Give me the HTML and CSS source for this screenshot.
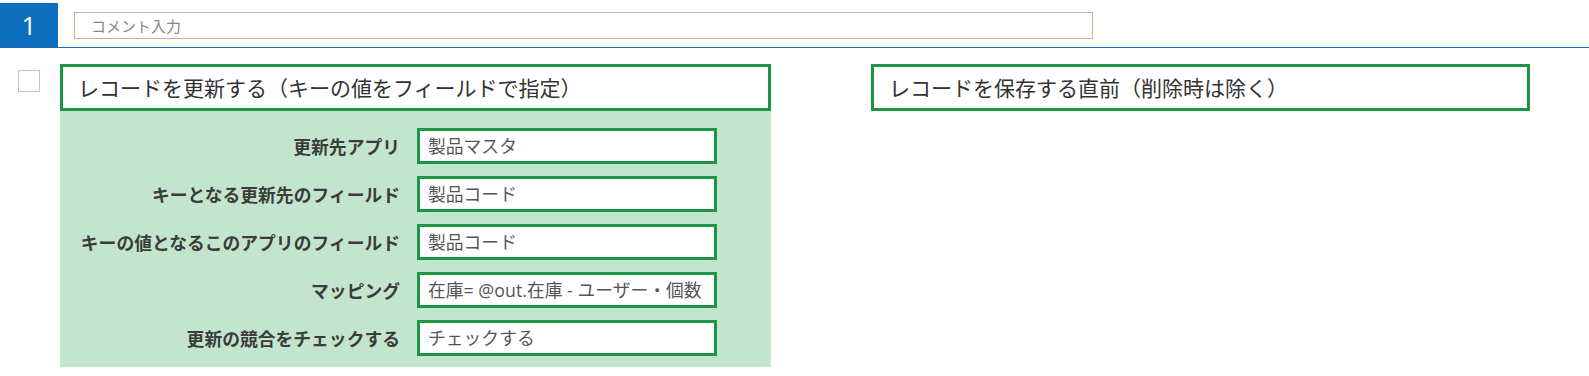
FILE: index.html
```html
<!DOCTYPE html>
<html lang="ja">
<head>
    <meta charset="UTF-8">
    <meta name="viewport" content="width=device-width, initial-scale=1.0">
    <title>アクション設定</title>
    <link rel="stylesheet" href="styles.css">
</head>
<body>

<header class="action-header">
    <div class="action-no">1</div>
    <input class="comment" type="text" placeholder="コメント入力">
</header>

<section class="action-body">
    <div class="check"></div>

    <div class="panel panel-left">
        <div class="title-box">レコードを更新する（キーの値をフィールドで指定）</div>
        <div class="settings">
            <label>更新先アプリ</label>
            <div class="field">製品マスタ</div>
            <label>キーとなる更新先のフィールド</label>
            <div class="field">製品コード</div>
            <label>キーの値となるこのアプリのフィールド</label>
            <div class="field">製品コード</div>
            <label>マッピング</label>
            <div class="field">在庫= @out.在庫 - ユーザー・個数</div>
            <label>更新の競合をチェックする</label>
            <div class="field">チェックする</div>
        </div>
    </div>

    <div class="panel panel-right">
        <div class="title-box">レコードを保存する直前（削除時は除く）</div>
    </div>
</section>

</body>
</html>
```

FILE: styles.css
```css
body {
    font-family: "Noto Sans CJK JP", "Noto Sans", sans-serif;
    margin: 0;
    padding: 0;
    background-color: #fff;
    color: #333;
}
.action-header {
    display: flex;
    align-items: flex-start;
    padding-top: 3px;
    height: 44px;
    border-bottom: 1px solid #1a6fb3;
}
.action-no {
    width: 58px;
    height: 44px;
    background-color: #0c6ebd;
    color: white;
    font-family: "Open Sans", sans-serif;
    font-size: 26px;
    line-height: 44px;
    text-align: center;
}
.comment {
    margin: 9px 0 0 16px;
    width: 1019px;
    height: 27px;
    box-sizing: border-box;
    border: 1px solid #c9b394;
    padding: 0 16px;
    font-family: "Noto Sans CJK JP", sans-serif;
    font-size: 15px;
    color: #888;
    outline: none;
}
.comment::placeholder {
    color: #888;
}
.action-body {
    display: flex;
    align-items: flex-start;
    padding-top: 16px;
}
.check {
    width: 22px;
    height: 22px;
    box-sizing: border-box;
    border: 1px solid #d4c2aa;
    margin: 6px 20px 0 18px;
}
.panel-left {
    width: 711px;
    background-color: #c4e5cd;
}
.panel-right {
    width: 659px;
    margin-left: 100px;
}
.title-box {
    height: 47px;
    box-sizing: border-box;
    border: 3px solid #1c9547;
    background-color: white;
    padding: 0 15px;
    font-size: 21px;
    line-height: 41px;
    color: #333;
}
.settings {
    display: grid;
    grid-template-columns: 340px 300px;
    column-gap: 17px;
    row-gap: 12px;
    padding: 17px 0 11px 0;
}
.settings label {
    text-align: right;
    font-weight: bold;
    font-size: 17.8px;
    line-height: 36px;
    color: #3c3c3c;
}
.settings .field {
    height: 36px;
    box-sizing: border-box;
    border: 3px solid #1c9547;
    background-color: white;
    padding: 0 8px;
    font-family: "Open Sans", "Noto Sans CJK JP", sans-serif;
    font-size: 17.8px;
    line-height: 30px;
    color: #555;
    white-space: nowrap;
    overflow: hidden;
}
```
